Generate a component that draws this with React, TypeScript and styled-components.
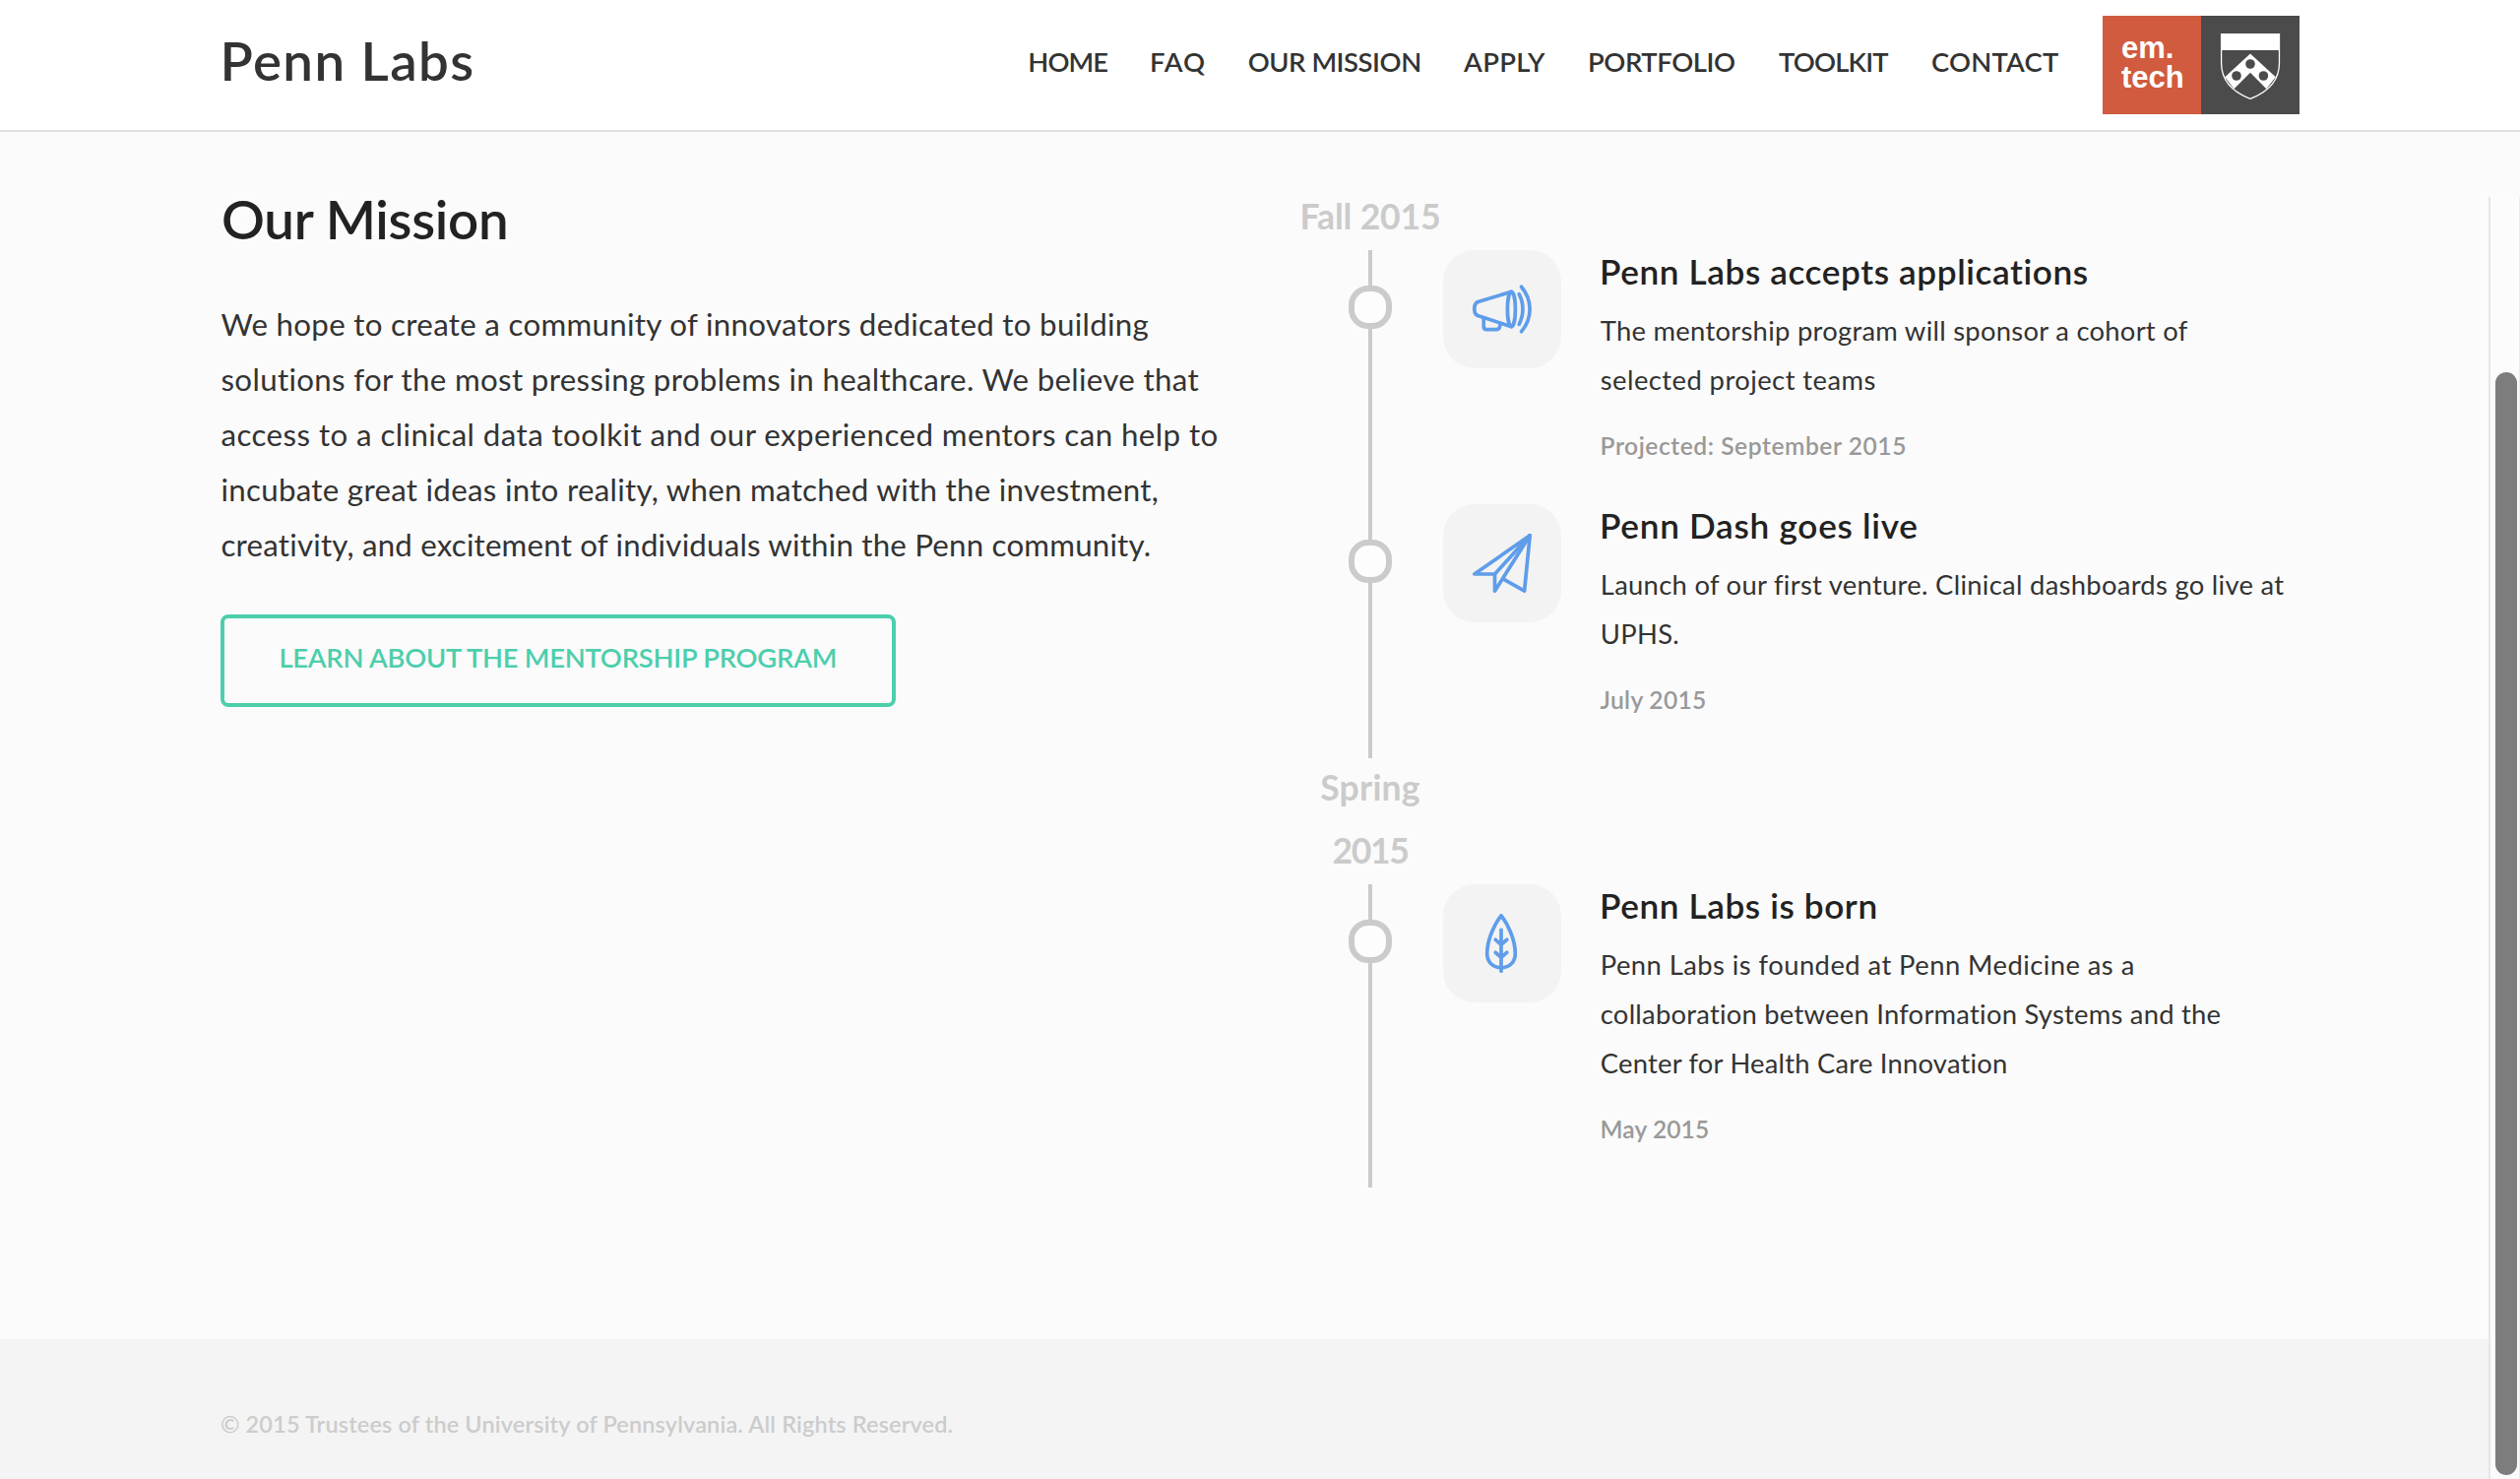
import React from "react";
import styled, { createGlobalStyle } from "styled-components";

const GlobalStyle = createGlobalStyle`
  * { box-sizing: border-box; }
  html, body { margin: 0; padding: 0; }
  body {
    background: #fbfbfb;
    color: #333;
    font-family: Lato, "Open Sans", sans-serif;
    overflow: hidden;
  }
  h1, h2, h3, p, ul { margin: 0; padding: 0; font-weight: inherit; }
`;

const Page = styled.div`
  position: relative;
  display: flex;
  flex-direction: column;
  width: 2560px;
  height: 1502px;
  overflow: hidden;
`;

const Header = styled.header`
  display: flex;
  align-items: flex-start;
  height: 134px;
  padding: 0 224px;
  background: #fff;
  border-bottom: 2px solid #e0e2e1;
`;

const Brand = styled.h1`
  flex: 1;
  font-size: 54.7px;
  font-weight: 600;
  line-height: 122px;
  letter-spacing: 1.4px;
  text-indent: -0.5px;
`;

const Nav = styled.nav`
  display: flex;
`;

const NavLink = styled.a<{ $slot: number; $track: number }>`
  width: ${(p) => p.$slot}px;
  font-size: 27.4px;
  font-weight: 600;
  line-height: 125px;
  white-space: nowrap;
  letter-spacing: ${(p) => p.$track}px;
`;

const Logo = styled.div`
  display: flex;
  margin-top: 16px;
  width: 200px;
  height: 100px;
`;

const LogoWord = styled.div`
  width: 100px;
  padding: 18px 0 0 19px;
  background: #d15b3f;
  color: #fff;
  font: bold 31px/30px "Liberation Sans", Arial, sans-serif;
`;

const LogoCrest = styled.div`
  width: 100px;
  background: #4b4b4b;
`;

const Main = styled.main`
  display: flex;
  height: 1226px;
  padding: 53px 224px 0;
`;

const Mission = styled.section`
  width: 1096px;
`;

const MissionTitle = styled.h2`
  margin-bottom: 44px;
  padding-left: 1px;
  color: #222;
  font-size: 54.7px;
  font-weight: 600;
  line-height: 70px;
  letter-spacing: -0.29px;
`;

const MissionText = styled.p`
  padding-left: 0.5px;
  font-size: 31.3px;
  line-height: 56px;
`;

const Line = styled.span<{ $track?: number }>`
  display: block;
  white-space: nowrap;
  letter-spacing: ${(p) => p.$track ?? 0}px;
`;

const Button = styled.a`
  display: block;
  width: 686px;
  height: 94px;
  margin-top: 43px;
  padding: 16px 0 0 55.4px;
  border: 4px solid #4dceac;
  border-radius: 8px;
  color: #4dceac;
  font-size: 27.4px;
  font-weight: 600;
  line-height: 47px;
  letter-spacing: -0.25px;
  white-space: nowrap;
`;

const Timeline = styled.section`
  padding-top: 3px;
`;

const PeriodLabel = styled.h3`
  width: 144px;
  margin-top: -2px;
  padding-bottom: 2px;
  color: #cbcbcb;
  font-size: 35.6px;
  font-weight: 700;
  line-height: 64px;
  text-align: center;
`;

const Event = styled.article<{ $height: number }>`
  display: grid;
  grid-template-columns: 144px 120px 1fr;
  height: ${(p) => p.$height}px;
`;

const Rail = styled.div`
  display: flex;
  flex-direction: column;
  align-items: center;
`;

const RailSegment = styled.div<{ $height?: number }>`
  width: 4px;
  background: #cbcbcb;
  ${(p) => (p.$height ? `height: ${p.$height}px;` : "flex: 1;")}
`;

const RailDot = styled.div`
  width: 44px;
  height: 44px;
  border: 6px solid #cbcbcb;
  border-radius: 20px;
  background: #fdfdfd;
`;

const IconTile = styled.div`
  display: flex;
  align-items: center;
  justify-content: center;
  width: 120px;
  height: 120px;
  margin-left: 2px;
  border-radius: 32px;
  background: #f3f3f3;
`;

const EventBody = styled.div`
  padding-left: 41px;
`;

const EventTitle = styled.h3`
  margin-bottom: 15px;
  color: #222;
  font-size: 35.2px;
  font-weight: 600;
  line-height: 42px;
`;

const EventText = styled.p`
  margin-bottom: 22px;
  padding-left: 0.8px;
  font-size: 27.4px;
  line-height: 50px;
`;

const EventDate = styled.p`
  padding-left: 0.6px;
  color: #999;
  font-size: 24.6px;
  font-weight: 600;
  line-height: 40px;
`;

const Footer = styled.footer`
  height: 142px;
  padding: 71px 224px 0;
  background: #f4f4f4;
  color: #ccc;
  font-size: 23.5px;
  font-weight: 600;
  line-height: 30px;
`;

const ScrollTrack = styled.div`
  position: absolute;
  top: 200px;
  right: 0;
  bottom: 0;
  width: 32px;
  padding: 178px 2px 4px 5px;
  border-left: 2px solid #e6e6e6;
  border-right: 1px solid #ebebeb;
  background: rgba(251, 251, 251, 0.85);
`;

const ScrollThumb = styled.div`
  width: 22px;
  height: 1120px;
  border-radius: 11px;
  background: #7d7d7d;
`;

const Glyph = ({ children }: { children: React.ReactNode }) => (
  <svg width="60" height="60" viewBox="0 0 60 60" fill="none" stroke="#5f9dea" strokeWidth="3.7" strokeLinecap="round" strokeLinejoin="round">
    {children}
  </svg>
);

const Megaphone = () => (
  <Glyph>
    <path d="M39.3 12.3 5.6 22.6C3 23.6 1.8 26 1.8 29.6s1.1 6 3.4 7L39.3 47.7" />
    <ellipse cx="39.4" cy="30" rx="4" ry="17.7" />
    <path d="M11.2 38.8v8.6c0 2 1.2 3.2 3.2 3.2h10c2 0 3.3-1.6 3.5-4.4" />
    <path d="M47.2 14.7c5 9.5 5 21.1 0 30.6" />
    <path d="M49.5 7.2c11.500 13.500 11.500 32 0 45.500" />
  </Glyph>
);

const PaperPlane = () => (
  <Glyph>
    <path d="M58.2 1.8 1.8 41H22.5Z" />
    <path d="M22.5 41V58.2L58.2 1.8" />
    <path d="M31.3 46.2 52.6 58.2 58.2 1.8" />
  </Glyph>
);

const Leaf = () => (
  <Glyph>
    <path d="M29 1.8C22.5 10 14.7 26 14.7 40.2 14.7 49 20.5 54.7 29 54.7s14.3-5.7 14.3-14.5C43.3 26 35.5 10 29 1.8Z" />
    <path d="M29 16.3V58.2M23.3 26.3l5.7 5 5.7-5M23.3 39.3l5.7 5 5.7-5" />
  </Glyph>
);

const Crest = () => (
  <svg width="100" height="100" viewBox="0 0 100 100">
    <path d="M20.6 18.6H79.5V48C79.5 64.5 70.5 76.5 50 84.3 29.5 76.5 20.6 64.5 20.6 48Z" fill="#4b4b4b" stroke="#fff" strokeWidth="1.3" />
    <path d="M20 18H80V35H20Z" fill="#fff" />
    <path d="M50 38.5 75.8 62.3 66.3 74.3 50 57.7 33.5 74.3 24.2 62.3Z" fill="#fff" />
    <circle cx="50" cy="49" r="4.8" fill="#4b4b4b" />
    <circle cx="36" cy="61" r="4.8" fill="#4b4b4b" />
    <circle cx="63.4" cy="61" r="4.8" fill="#4b4b4b" />
  </svg>
);

type Tracked = [text: string, track: number];

const links: { label: string; slot: number; track: number }[] = [
  { label: "HOME", slot: 123.6, track: -0.97 },
  { label: "FAQ", slot: 99.7, track: 1.0 },
  { label: "OUR MISSION", slot: 219.4, track: -0.44 },
  { label: "APPLY", slot: 125.9, track: 0.3 },
  { label: "PORTFOLIO", slot: 194.1, track: -0.39 },
  { label: "TOOLKIT", slot: 155.1, track: -0.82 },
  { label: "CONTACT", slot: 173.9, track: 0.19 },
];

const missionLines: Tracked[] = [
  ["We hope to create a community of innovators dedicated to building", 0.291],
  ["solutions for the most pressing problems in healthcare. We believe that", 0.315],
  ["access to a clinical data toolkit and our experienced mentors can help to", 0.411],
  ["incubate great ideas into reality, when matched with the investment,", 0.269],
  ["creativity, and excitement of individuals within the Penn community.", 0.18],
];

interface TimelineEvent {
  icon: React.ReactNode;
  height: number;
  title: Tracked;
  text: Tracked[];
  date: Tracked;
}

const periods: { label: Tracked[]; events: TimelineEvent[] }[] = [
  {
    label: [["Fall 2015", -0.2]],
    events: [
      {
        icon: <Megaphone />,
        height: 258,
        title: ["Penn Labs accepts applications", 0.584],
        text: [
          ["The mentorship program will sponsor a cohort of", 0.27],
          ["selected project teams", 0.436],
        ],
        date: ["Projected: September 2015", 0.54],
      },
      {
        icon: <PaperPlane />,
        height: 258,
        title: ["Penn Dash goes live", 0.71],
        text: [
          ["Launch of our first venture. Clinical dashboards go live at", 0.287],
          ["UPHS.", 0.278],
        ],
        date: ["July 2015", 0.3],
      },
    ],
  },
  {
    label: [
      ["Spring", 0.178],
      ["2015", -1.4],
    ],
    events: [
      {
        icon: <Leaf />,
        height: 308,
        title: ["Penn Labs is born", 0.58],
        text: [
          ["Penn Labs is founded at Penn Medicine as a", 0.44],
          ["collaboration between Information Systems and the", 0.236],
          ["Center for Health Care Innovation", 0.21],
        ],
        date: ["May 2015", 0.06],
      },
    ],
  },
];

const Lines = ({ lines }: { lines: Tracked[] }) => (
  <>
    {lines.map(([text, track]) => (
      <Line key={text} $track={track}>
        {text}
      </Line>
    ))}
  </>
);

export default function App() {
  return (
    <Page>
      <GlobalStyle />
      <Header>
        <Brand>Penn Labs</Brand>
        <Nav>
          {links.map((l) => (
            <NavLink key={l.label} $slot={l.slot} $track={l.track}>
              {l.label}
            </NavLink>
          ))}
        </Nav>
        <Logo>
          <LogoWord>
            em.
            <br />
            tech
          </LogoWord>
          <LogoCrest>
            <Crest />
          </LogoCrest>
        </Logo>
      </Header>
      <Main>
        <Mission>
          <MissionTitle>Our Mission</MissionTitle>
          <MissionText>
            <Lines lines={missionLines} />
          </MissionText>
          <Button>LEARN ABOUT THE MENTORSHIP PROGRAM</Button>
        </Mission>
        <Timeline>
          {periods.map((period) => (
            <React.Fragment key={period.label[0][0]}>
              <PeriodLabel>
                <Lines lines={period.label} />
              </PeriodLabel>
              {period.events.map((e) => (
                <Event key={e.title[0]} $height={e.height}>
                  <Rail>
                    <RailSegment $height={36} />
                    <RailDot />
                    <RailSegment />
                  </Rail>
                  <IconTile>{e.icon}</IconTile>
                  <EventBody>
                    <EventTitle>
                      <Lines lines={[e.title]} />
                    </EventTitle>
                    <EventText>
                      <Lines lines={e.text} />
                    </EventText>
                    <EventDate>
                      <Lines lines={[e.date]} />
                    </EventDate>
                  </EventBody>
                </Event>
              ))}
            </React.Fragment>
          ))}
        </Timeline>
      </Main>
      <Footer>
        <Line $track={0.14}>© 2015 Trustees of the University of Pennsylvania. All Rights Reserved.</Line>
      </Footer>
      <ScrollTrack>
        <ScrollThumb />
      </ScrollTrack>
    </Page>
  );
}
